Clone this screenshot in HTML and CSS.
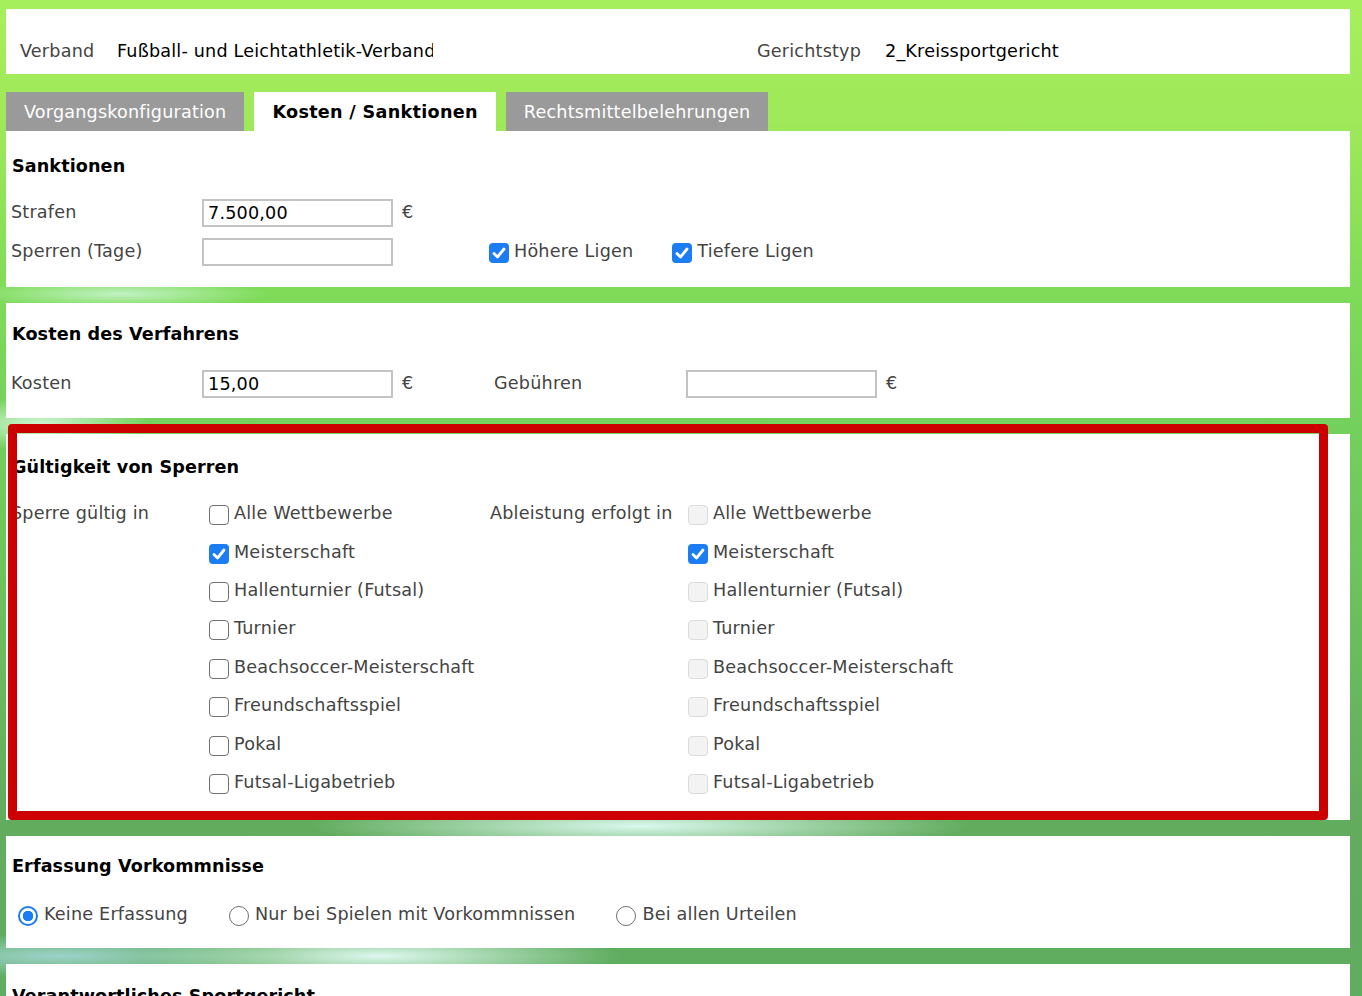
FILE: index.html
```html
<!DOCTYPE html>
<html lang="de">
<head>
    <meta charset="UTF-8">
    <title>Kosten / Sanktionen</title>
    <link rel="stylesheet" href="styles.css">
</head>
<body>
    <div class="page">
        <div class="head-box">
            <div class="head-field head-field-first">
                <span class="head-label">Verband</span>
                <span class="head-value head-value-clip">Fußball- und Leichtathletik-Verband</span>
            </div>
            <div class="head-field">
                <span class="head-label head-label-wide">Gerichtstyp</span>
                <span class="head-value">2_Kreissportgericht</span>
            </div>
        </div>

        <div class="tabs">
            <div class="tab">Vorgangskonfiguration</div>
            <div class="tab tab-active">Kosten / Sanktionen</div>
            <div class="tab">Rechtsmittelbelehrungen</div>
        </div>

        <div class="panel panel-first">
            <h2>Sanktionen</h2>
            <div class="form-grid">
                <span class="field-label">Strafen</span>
                <input class="field-input" type="text" value="7.500,00">
                <span class="unit">€</span>
                <span></span><span></span><span></span>

                <span class="field-label">Sperren (Tage)</span>
                <input class="field-input" type="text" value="">
                <span></span>
                <div class="check-row">
                    <span class="check"><span class="box box-on"><svg viewBox="0 0 20 20"><path d="M5 10.5l3.5 3.5 6.5-8" /></svg></span>Höhere Ligen</span>
                    <span class="check"><span class="box box-on"><svg viewBox="0 0 20 20"><path d="M5 10.5l3.5 3.5 6.5-8" /></svg></span>Tiefere Ligen</span>
                </div>
            </div>
        </div>

        <div class="panel panel-costs">
            <h2>Kosten des Verfahrens</h2>
            <div class="form-grid">
                <span class="field-label">Kosten</span>
                <input class="field-input" type="text" value="15,00">
                <span class="unit">€</span>
                <span class="field-label field-label-inner">Gebühren</span>
                <input class="field-input" type="text" value="">
                <span class="unit">€</span>
            </div>
        </div>

        <div class="panel panel-marked">
            <h2>Gültigkeit von Sperren</h2>
            <div class="valid-grid">
                <span class="field-label">Sperre gültig in</span>
                <span class="check"><span class="box"></span>Alle Wettbewerbe</span>
                <span class="field-label">Ableistung erfolgt in</span>
                <span class="check"><span class="box box-off"></span>Alle Wettbewerbe</span>

                <span></span>
                <span class="check"><span class="box box-on"><svg viewBox="0 0 20 20"><path d="M5 10.5l3.5 3.5 6.5-8" /></svg></span>Meisterschaft</span>
                <span></span>
                <span class="check"><span class="box box-on"><svg viewBox="0 0 20 20"><path d="M5 10.5l3.5 3.5 6.5-8" /></svg></span>Meisterschaft</span>

                <span></span>
                <span class="check"><span class="box"></span>Hallenturnier (Futsal)</span>
                <span></span>
                <span class="check"><span class="box box-off"></span>Hallenturnier (Futsal)</span>

                <span></span>
                <span class="check"><span class="box"></span>Turnier</span>
                <span></span>
                <span class="check"><span class="box box-off"></span>Turnier</span>

                <span></span>
                <span class="check"><span class="box"></span>Beachsoccer-Meisterschaft</span>
                <span></span>
                <span class="check"><span class="box box-off"></span>Beachsoccer-Meisterschaft</span>

                <span></span>
                <span class="check"><span class="box"></span>Freundschaftsspiel</span>
                <span></span>
                <span class="check"><span class="box box-off"></span>Freundschaftsspiel</span>

                <span></span>
                <span class="check"><span class="box"></span>Pokal</span>
                <span></span>
                <span class="check"><span class="box box-off"></span>Pokal</span>

                <span></span>
                <span class="check"><span class="box"></span>Futsal-Ligabetrieb</span>
                <span></span>
                <span class="check"><span class="box box-off"></span>Futsal-Ligabetrieb</span>
            </div>
            <div class="marker"></div>
        </div>

        <div class="panel">
            <h2>Erfassung Vorkommnisse</h2>
            <div class="radio-row">
                <span class="radio"><span class="dot dot-on"></span>Keine Erfassung</span>
                <span class="radio"><span class="dot"></span>Nur bei Spielen mit Vorkommnissen</span>
                <span class="radio"><span class="dot"></span>Bei allen Urteilen</span>
            </div>
        </div>

        <div class="panel panel-last">
            <h2>Verantwortliches Sportgericht</h2>
            <div class="form-grid">
                <span class="field-label">Sportgericht</span>
                <input class="field-input" type="text" value="">
            </div>
        </div>
    </div>
</body>
</html>
```

FILE: styles.css
```css
html {
    background-color: #7fd85a;
}
body {
    margin: 0;
    font-family: 'DejaVu Sans', Verdana, sans-serif;
    font-size: 17.6px;
    letter-spacing: 0.19px;
    color: #444;
    background:
        radial-gradient(ellipse 330px 26px at 640px 826px, rgba(225, 252, 246, 0.95), rgba(225, 252, 246, 0) 100%),
        radial-gradient(ellipse 240px 26px at 380px 956px, rgba(228, 252, 246, 0.95), rgba(228, 252, 246, 0) 100%),
        radial-gradient(ellipse 220px 22px at 60px 956px, rgba(160, 212, 208, 0.95), rgba(160, 212, 208, 0) 100%),
        radial-gradient(ellipse 110px 26px at 40px 424px, rgba(215, 250, 225, 0.9), rgba(215, 250, 225, 0) 100%),
        radial-gradient(ellipse 150px 14px at 120px 294px, rgba(205, 246, 215, 0.85), rgba(205, 246, 215, 0) 100%),
        linear-gradient(180deg, #a6ef5c 0px, #9fe95a 120px, #7fdb58 290px, #74d15c 420px, #62ac5e 820px, #5fad60 1000px, #5da95f 1400px);
}
.page {
    padding: 9px 12px 40px 6px;
}

/* kopfbereich */
.head-box {
    background-color: #fff;
    height: 65px;
    box-sizing: border-box;
    padding: 31px 14px 0 14px;
    display: flex;
    line-height: 22px;
}
.head-field {
    display: flex;
}
.head-field-first {
    width: 737px;
}
.head-label {
    width: 97px;
    flex-shrink: 0;
}
.head-label-wide {
    width: 128px;
}
.head-value {
    color: #000;
    white-space: nowrap;
}
.head-value-clip {
    width: 316px;
    overflow: hidden;
}

/* reiter */
.tabs {
    display: flex;
    gap: 10px;
    margin-top: 18px;
}
.tab {
    height: 39px;
    line-height: 40px;
    padding: 0 18px;
    background-color: #9a9a9a;
    color: #fff;
    white-space: nowrap;
}
.tab-active {
    background-color: #fff;
    color: #000;
    font-weight: bold;
    letter-spacing: 0.3px;
}

/* bereiche */
.panel {
    position: relative;
    background-color: #fff;
    margin-bottom: 16px;
    padding: 19px 5px 15px 5px;
}
.panel-first {
    padding-top: 24px;
    padding-bottom: 17px;
}
.panel-costs {
    padding-top: 20px;
    padding-bottom: 16px;
}
.panel-costs .form-grid {
    margin-top: 18px;
}
.panel-marked {
    padding-top: 22px;
    padding-bottom: 19px;
}
.panel-last {
    padding-top: 21px;
    min-height: 200px;
}
h2 {
    margin: 0 0 0 1px;
    font-size: 17.6px;
    line-height: 22px;
    letter-spacing: 0.1px;
    color: #000;
}
.form-grid {
    display: grid;
    grid-template-columns: 191px 191px 96px 197px 191px auto;
    grid-auto-rows: 39px;
    align-items: center;
    margin-top: 15px;
}
.field-label {
    white-space: nowrap;
}
.field-label-inner {
    padding-left: 5px;
}
.field-input {
    box-sizing: border-box;
    width: 191px;
    height: 28px;
    margin: 3px 0 0 0;
    padding: 0 4px;
    border: 2px solid #c3c3c3;
    font-family: 'DejaVu Sans', Verdana, sans-serif;
    font-size: 17.6px;
    letter-spacing: 0.19px;
    color: #000;
    background-color: #fff;
}
.unit {
    padding-left: 9px;
}
.check-row {
    grid-column: span 3;
    display: flex;
    gap: 39px;
}

.valid-grid {
    display: grid;
    grid-template-columns: 198px 281px 198px auto;
    grid-auto-rows: 38.4px;
    align-items: center;
    margin-top: 16px;
}
.check {
    display: flex;
    align-items: center;
    gap: 5px;
    white-space: nowrap;
}
.box {
    box-sizing: border-box;
    width: 20px;
    height: 20px;
    margin-top: 4px;
    border: 1px solid #707070;
    border-radius: 4px;
    background-color: #fff;
    flex-shrink: 0;
}
.box svg {
    display: block;
    width: 20px;
    height: 20px;
    fill: none;
    stroke: #fff;
    stroke-width: 2.8;
    stroke-linecap: round;
    stroke-linejoin: round;
}
.box-on {
    border: none;
    background-color: #1c7cf4;
}
.box-off {
    border-color: #dcdcdc;
    background-color: #f3f3f3;
}

/* roter rahmen */
.marker {
    position: absolute;
    left: 2px;
    top: -10px;
    right: 22px;
    bottom: 0;
    border: 9px solid #cc0000;
    border-radius: 4px;
}

.radio-row {
    display: flex;
    gap: 41px;
    margin-top: 18px;
    height: 38px;
    align-items: center;
    padding-left: 7px;
}
.radio {
    display: flex;
    align-items: center;
    gap: 6px;
    white-space: nowrap;
}
.dot {
    box-sizing: border-box;
    width: 20px;
    height: 20px;
    margin-top: 4px;
    border: 1px solid #707070;
    border-radius: 50%;
    background-color: #fff;
}
.dot-on {
    border: 2px solid #1c7cf4;
    background: radial-gradient(circle, #1c7cf4 0, #1c7cf4 5px, #fff 5.5px);
}
```
